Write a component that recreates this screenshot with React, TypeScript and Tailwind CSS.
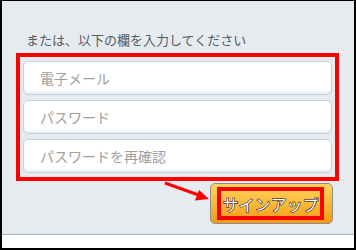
export default function App() {
  const font = { fontFamily: '"Noto Sans CJK JP", "Liberation Sans", sans-serif' };
  return (
    <main className="w-[356px] h-[250px] bg-white overflow-hidden" style={font}>
      <div className="flex h-full flex-col border-2 border-t border-black">
        <div className="relative h-[234px] border-b border-[#a9b3bc] bg-[#e6ebf0] pl-[14px] pr-[15px]">
          <p className="pt-[30px] pl-[10px] text-[13px] leading-[17px] text-[#555a60]">
            または、以下の欄を入力してください
          </p>
          <div className="mt-[5px] flex flex-col gap-[5px] border-[4px] border-[#ff0000] px-[3px] py-[4px]">
            <div className="flex h-[34px] items-center rounded-[5px] border border-[#c9d1d8] bg-white pl-[16px] text-[14px] text-[#a0a0a0] shadow-[inset_0_-2px_2px_#e8ecef]">
              電子メール
            </div>
            <div className="flex h-[34px] items-center rounded-[5px] border border-[#c9d1d8] bg-white pl-[16px] text-[14px] text-[#a0a0a0] shadow-[inset_0_-2px_2px_#e8ecef]">
              パスワード
            </div>
            <div className="flex h-[34px] items-center rounded-[5px] border border-[#c9d1d8] bg-white pl-[16px] text-[14px] text-[#a0a0a0] shadow-[inset_0_-2px_2px_#e8ecef]">
              パスワードを再確認
            </div>
          </div>
          <div className="mt-[2px] flex justify-end pr-[6px]">
            <div className="rounded-[5px] border border-[#8d8d8d] bg-gradient-to-b from-[#ffd55a] to-[#f59a0c] pl-[6px] pr-[8px] py-[3px]">
              <div
                className="flex h-[33px] w-[107px] items-center justify-center whitespace-nowrap border-[4px] border-[#ff0000] text-[16px] text-white"
                style={{ WebkitTextStroke: "1px #000", paintOrder: "stroke fill" }}
              >
                サインアップ
              </div>
            </div>
          </div>
          <svg className="absolute left-[160px] top-[180px]" width="50" height="22" viewBox="0 0 50 22">
            <line x1="3" y1="2" x2="38" y2="14.5" stroke="#ff0000" strokeWidth="3" />
            <polygon points="47,18 33,19.5 37,9" fill="#ff0000" />
          </svg>
        </div>
        <div className="flex-1 bg-white" />
      </div>
    </main>
  );
}
